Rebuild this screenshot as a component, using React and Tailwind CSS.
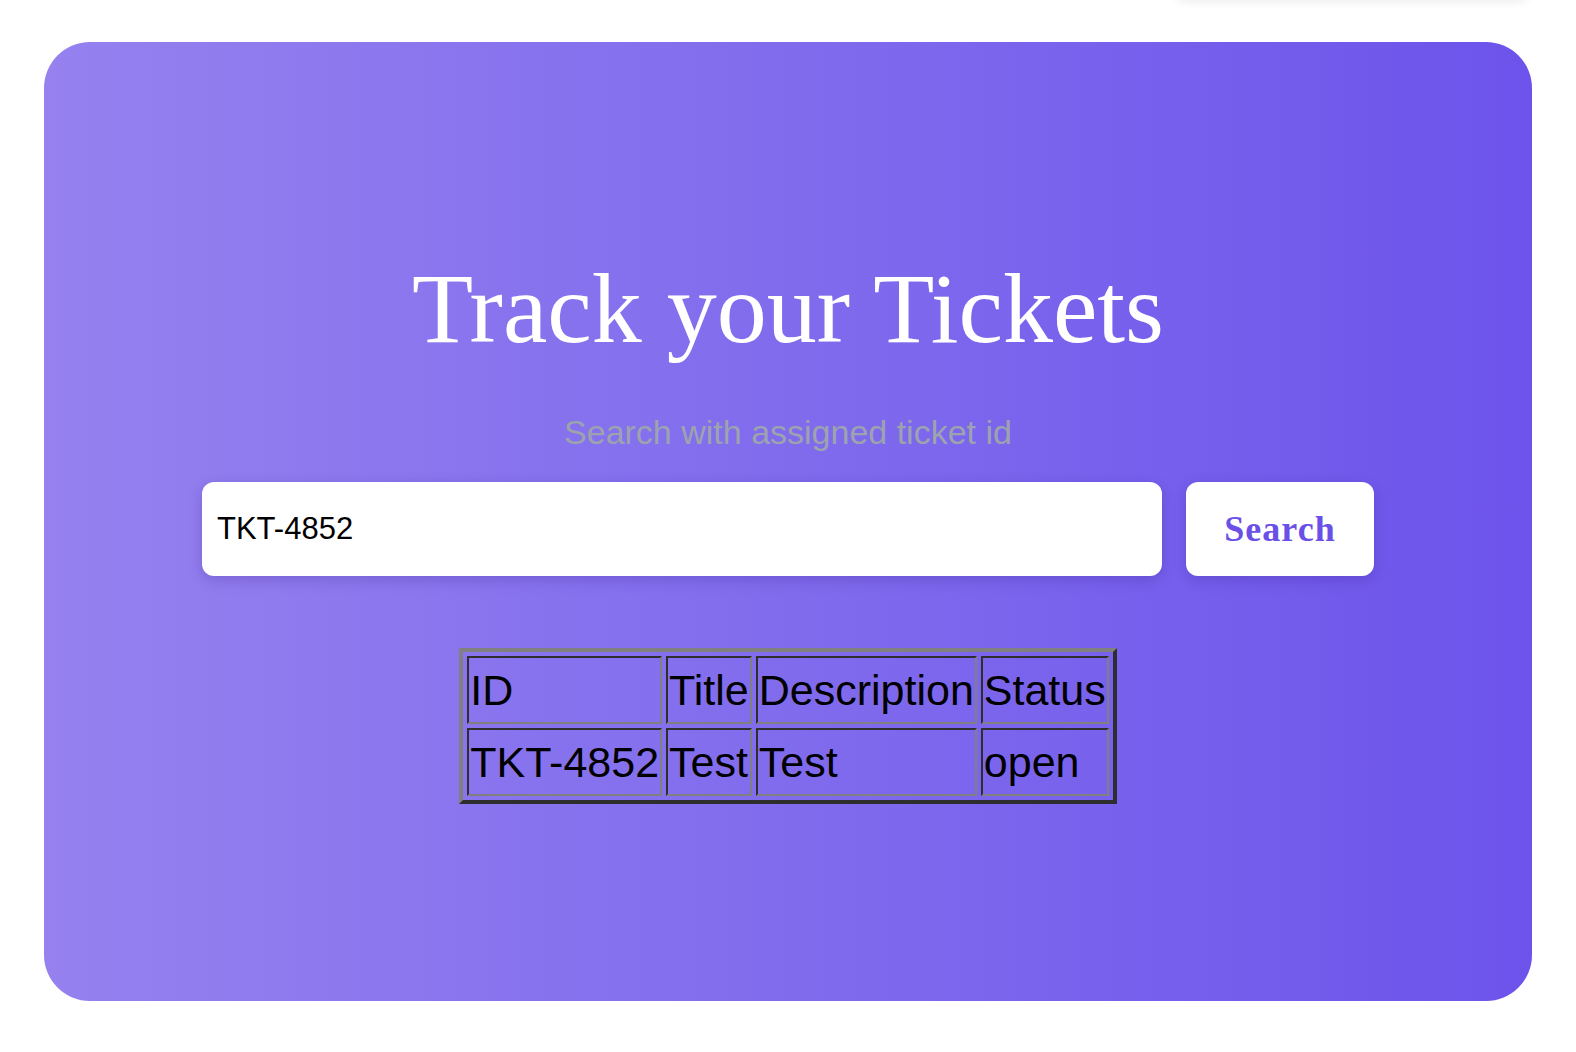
import React, { useState } from 'react';

const tickets = [{ id: 'TKT-4852', title: 'Test', description: 'Test', status: 'open' }];

export default function App() {
  const [query, setQuery] = useState('TKT-4852');

  return (
    <div className="relative min-h-screen overflow-hidden bg-white px-[44px] pt-[42px] pb-[51px]">
      {/* Toast peeking above the viewport */}
      <div className="absolute -top-[50px] right-[46px] h-[50px] w-[356px] rounded-xl bg-white shadow-[0_2px_10px_rgba(0,0,0,0.07)]" />

      {/* Card */}
      <div className="flex h-[959px] flex-col items-center rounded-[46px] bg-linear-to-r from-[#9681ef] to-[#6d53eb] pt-[192px]">
        <h1 className="font-['Liberation_Serif',serif] text-[100px] font-normal leading-normal text-white">
          Track your Tickets
        </h1>
        <p className="mt-[23px] font-['Liberation_Sans',Arial,sans-serif] text-[34px] leading-normal text-[#9ca3af]">
          Search with assigned ticket id
        </p>

        {/* Search row */}
        <div className="mt-[24px] flex items-center gap-[24px]">
          <input
            value={query}
            onChange={(e) => setQuery(e.target.value)}
            className="h-[94px] w-[960px] rounded-[12px] bg-white pl-[15px] font-['Liberation_Sans',Arial,sans-serif] text-[31px] text-black shadow-[0_4px_14px_rgba(40,20,120,0.22)] outline-none"
          />
          <button className="h-[94px] w-[188px] rounded-[12px] bg-white font-['Liberation_Serif',serif] text-[36px] font-bold tracking-[1px] text-[#6b50e8] shadow-[0_4px_14px_rgba(40,20,120,0.22)]">
            Search
          </button>
        </div>

        {/* Results */}
        <table className="mt-[72px] border-separate border-spacing-[4px] border-4 border-t-[#808080] border-l-[#808080] border-b-[#2e2e2e] border-r-[#2e2e2e] font-['Liberation_Sans',Arial,sans-serif] text-[43px] text-black">
          <thead>
            <tr>
              {['ID', 'Title', 'Description', 'Status'].map((h) => (
                <th
                  key={h}
                  className="border-2 border-t-[#2e2e2e] border-l-[#2e2e2e] border-b-[#808080] border-r-[#808080] px-px text-left font-normal leading-[64px]"
                >
                  {h}
                </th>
              ))}
            </tr>
          </thead>
          <tbody>
            {tickets.map((t) => (
              <tr key={t.id}>
                {[t.id, t.title, t.description, t.status].map((v, i) => (
                  <td
                    key={i}
                    className="border-2 border-t-[#2e2e2e] border-l-[#2e2e2e] border-b-[#808080] border-r-[#808080] px-px leading-[64px]"
                  >
                    {v}
                  </td>
                ))}
              </tr>
            ))}
          </tbody>
        </table>
      </div>
    </div>
  );
}
